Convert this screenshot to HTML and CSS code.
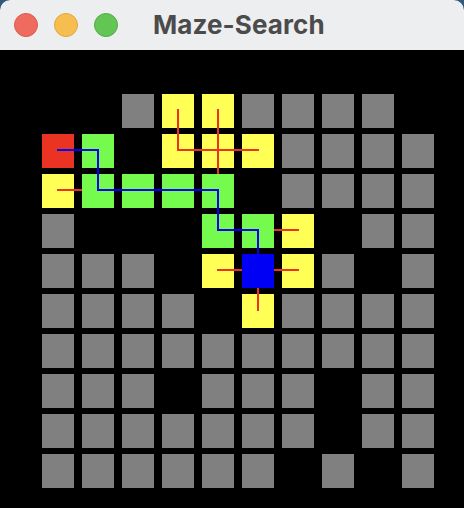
FILE: index.html
```html
<!DOCTYPE html>
<html>
<head>
<meta charset="utf-8">
<title>Maze-Search</title>
<link rel="stylesheet" href="styles.css">
</head>
<body>
<div class="window">
  <div class="titlebar">
    <div class="lights">
      <span class="light close"></span>
      <span class="light min"></span>
      <span class="light max"></span>
    </div>
    <div class="title">Maze-Search</div>
  </div>
  <div class="board">
    <div class="grid">
      <div class="c e"></div><div class="c e"></div><div class="c w"></div><div class="c y"></div><div class="c y"></div><div class="c w"></div><div class="c w"></div><div class="c w"></div><div class="c w"></div><div class="c e"></div>
      <div class="c r"></div><div class="c g"></div><div class="c e"></div><div class="c y"></div><div class="c y"></div><div class="c y"></div><div class="c w"></div><div class="c w"></div><div class="c w"></div><div class="c w"></div>
      <div class="c y"></div><div class="c g"></div><div class="c g"></div><div class="c g"></div><div class="c g"></div><div class="c e"></div><div class="c w"></div><div class="c w"></div><div class="c w"></div><div class="c w"></div>
      <div class="c w"></div><div class="c e"></div><div class="c e"></div><div class="c e"></div><div class="c g"></div><div class="c g"></div><div class="c y"></div><div class="c e"></div><div class="c w"></div><div class="c w"></div>
      <div class="c w"></div><div class="c w"></div><div class="c w"></div><div class="c e"></div><div class="c y"></div><div class="c b"></div><div class="c y"></div><div class="c w"></div><div class="c e"></div><div class="c w"></div>
      <div class="c w"></div><div class="c w"></div><div class="c w"></div><div class="c w"></div><div class="c e"></div><div class="c y"></div><div class="c w"></div><div class="c w"></div><div class="c w"></div><div class="c w"></div>
      <div class="c w"></div><div class="c w"></div><div class="c w"></div><div class="c w"></div><div class="c w"></div><div class="c w"></div><div class="c w"></div><div class="c w"></div><div class="c w"></div><div class="c w"></div>
      <div class="c w"></div><div class="c w"></div><div class="c w"></div><div class="c e"></div><div class="c w"></div><div class="c w"></div><div class="c w"></div><div class="c e"></div><div class="c w"></div><div class="c w"></div>
      <div class="c w"></div><div class="c w"></div><div class="c w"></div><div class="c w"></div><div class="c w"></div><div class="c w"></div><div class="c w"></div><div class="c e"></div><div class="c w"></div><div class="c w"></div>
      <div class="c w"></div><div class="c w"></div><div class="c w"></div><div class="c w"></div><div class="c w"></div><div class="c w"></div><div class="c e"></div><div class="c w"></div><div class="c e"></div><div class="c w"></div>
    </div>
    <svg class="paths" width="464" height="458" viewBox="0 50 464 458">
      <g class="tree">
        <line x1="58" y1="190" x2="81" y2="190"/>
        <line x1="178" y1="110" x2="178" y2="150"/>
        <line x1="178" y1="150" x2="258" y2="150"/>
        <line x1="218" y1="110" x2="218" y2="173"/>
        <line x1="275" y1="230" x2="298" y2="230"/>
        <line x1="218" y1="270" x2="241" y2="270"/>
        <line x1="275" y1="270" x2="298" y2="270"/>
        <line x1="258" y1="289" x2="258" y2="310"/>
      </g>
      <polyline class="route" points="58,150 98,150 98,190 218,190 218,230 258,230 258,262"/>
    </svg>
  </div>
</div>
</body>
</html>
```

FILE: styles.css
```css
html, body {
  margin: 0;
  padding: 0;
  background: #2f5a86;
}

.window {
  width: 464px;
  height: 508px;
  overflow: hidden;
  border-radius: 10px 10px 0 0;
  background: #000;
  display: flex;
  flex-direction: column;
}

.titlebar {
  height: 50px;
  flex: none;
  background: #edeef0;
  display: flex;
  align-items: center;
}

.lights {
  display: flex;
  gap: 16px;
  margin-left: 14px;
}

.light {
  width: 24px;
  height: 24px;
  border-radius: 50%;
  box-sizing: border-box;
}

.close { background: #ee6b60; border: 1px solid #e0574c; }
.min { background: #f6be4f; border: 1px solid #e2a73a; }
.max { background: #62c554; border: 1px solid #52ad44; }

.title {
  margin-left: 35px;
  font-family: Inter, "Liberation Sans", sans-serif;
  font-weight: 700;
  font-size: 26px;
  color: #4b4b4b;
  letter-spacing: 0.1px;
  margin-top: -2px;
}

.board {
  position: relative;
  flex: 1;
  background: #000;
  padding: 44px 0 0 42px;
}

.grid {
  display: grid;
  grid-template-columns: repeat(10, 32px);
  grid-template-rows: repeat(10, 34px);
  column-gap: 8px;
  row-gap: 6px;
}

.c.e { background: #000; }
.c.w { background: #808080; }
.c.y { background: #ffff55; }
.c.g { background: #75fb4e; }
.c.r { background: #ea3323; }
.c.b { background: #0000f5; }

.paths {
  position: absolute;
  top: 0;
  left: 0;
}

.tree line {
  stroke: #ea3323;
  stroke-width: 2;
  stroke-linecap: square;
}

.route {
  fill: none;
  stroke: #0000f5;
  stroke-width: 2;
  stroke-linecap: square;
  stroke-linejoin: miter;
}
```
